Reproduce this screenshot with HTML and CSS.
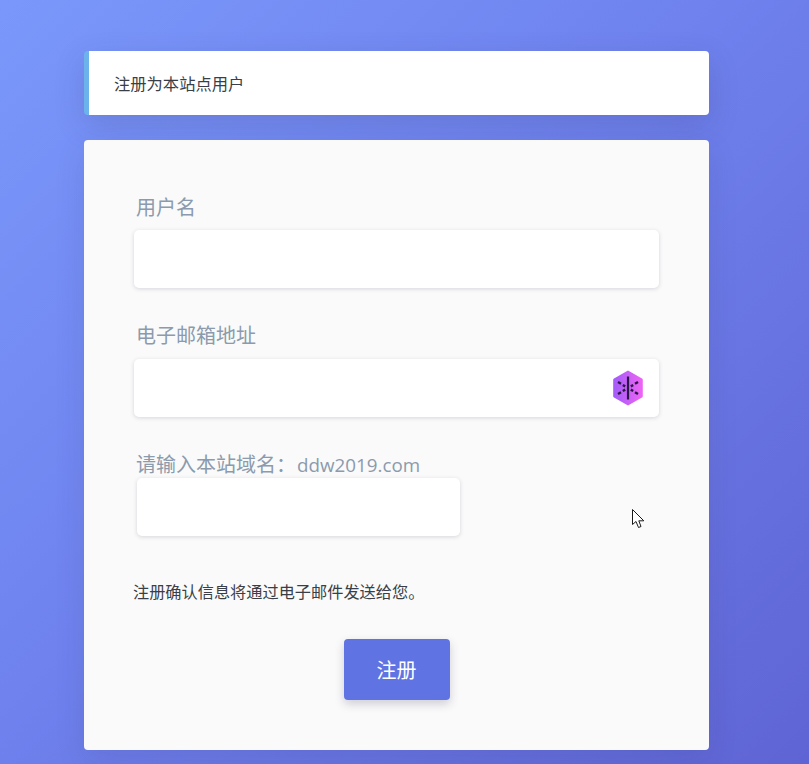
FILE: index.html
```html
<!DOCTYPE html>
<html lang="zh-CN">
<head>
<meta charset="utf-8">
<title>注册</title>
<link rel="stylesheet" href="styles.css">
</head>
<body>
<main class="page">
  <header class="notice">注册为本站点用户</header>
  <form class="panel">
    <div class="field">
      <label class="label">用户名</label>
      <input class="input" type="text">
    </div>
    <div class="field">
      <label class="label label-mail">电子邮箱地址</label>
      <div class="input-wrap">
        <input class="input" type="text">
        <svg class="ext-icon" width="32" height="36" viewBox="0 0 32 36">
          <defs>
            <linearGradient id="hex" x1="0" y1="0" x2="1" y2="0">
              <stop offset="0" stop-color="#a25bfa"/>
              <stop offset="1" stop-color="#f064f4"/>
            </linearGradient>
          </defs>
          <path d="M16 .5 30 8.500a1.500 1.500 0 0 1 .8 1.300V26.200a1.500 1.500 0 0 1-.8 1.300L16 35.500 2 27.500a1.500 1.500 0 0 1-.8-1.300V9.800a1.500 1.500 0 0 1 .8-1.300Z" fill="url(#hex)"/>
          <path d="M16 6.500V29.500" stroke="#2b1747" stroke-width="2.200" fill="none"/>
          <path d="M6 12 9 13.800M10.800 15 13.200 16.400M26 12 23 13.800M21.200 15 18.800 16.400M6 24 9 22.200M10.800 21 13.200 19.600M26 24 23 22.200M21.200 21 18.800 19.600" stroke="#2b1747" stroke-width="2.400" fill="none"/>
        </svg>
      </div>
    </div>
    <div class="captcha">
      <label class="label label-tight">请输入本站域名：<span class="latin">ddw2019.com</span></label>
      <input class="input input-short" type="text">
    </div>
    <p class="hint">注册确认信息将通过电子邮件发送给您。</p>
    <div class="actions">
      <button class="submit" type="button">注册</button>
    </div>
  </form>
</main>
<svg class="cursor" width="13" height="20" viewBox="0 0 13 20">
  <path d="M.5.5V15.500L4 12.500 6.500 18.500 9 17.500 6.800 11.800H11.800Z" fill="#fff" stroke="#1a1a1a" stroke-width="1"/>
</svg>
</body>
</html>
```
FILE: styles.css
```css
* { box-sizing: border-box; }
html, body { height: 100%; }
body {
  margin: 0;
  height: 764px;
  overflow: hidden;
  background: linear-gradient(135deg, #7a98fb 0%, #6f82ee 45%, #5f64d4 100%);
  font-family: "Open Sans", "Noto Sans CJK SC", sans-serif;
  color: #3a3f47;
}
.page {
  width: 625px;
  margin-left: 84px;
  padding-top: 51px;
  display: flex;
  flex-direction: column;
  gap: 25px;
}
.notice {
  height: 64px;
  padding-left: 25px;
  display: flex;
  align-items: center;
  background: #fff;
  border-left: 5px solid #6cb2eb;
  border-radius: 4px;
  font-size: 16.300px;
  box-shadow: 0 10px 30px rgba(50, 50, 93, .18);
}
.panel {
  height: 610px;
  padding: 50px 50px 0;
  background: #fafafa;
  border-radius: 4px;
  box-shadow: 0 10px 30px rgba(50, 50, 93, .12);
}
.field { margin-bottom: 30px; }
.label {
  display: block;
  height: 40px;
  padding: 3px 0 0 2px;
  font-size: 20px;
  line-height: 30px;
  color: #8b9bad;
}
.label-mail { height: 41px; }
.input {
  display: block;
  width: 100%;
  height: 58px;
  border: 0;
  border-radius: 5px;
  background: #fff;
  box-shadow: 0 1px 4px rgba(50, 50, 93, .18);
  outline: 0;
}
.input-wrap { position: relative; }
.ext-icon { position: absolute; right: 15px; top: 11px; }
.captcha { padding-left: 3px; }
.label-tight { height: 31px; margin-left: -1px; padding: 3px 0 0; line-height: 30px; white-space: nowrap; }
.latin { margin-left: 1px; font-size: 18.800px; }
.input-short { width: 323px; }
.hint {
  margin: 44px 0 0 -1px;
  font-size: 16.200px;
  line-height: 24px;
}
.actions { display: flex; justify-content: center; margin-top: 35px; }
.submit {
  width: 106px;
  height: 61px;
  border: 0;
  border-radius: 4px;
  background: #5f74e2;
  color: #fff;
  font: inherit;
  font-size: 20px;
  box-shadow: 0 4px 10px rgba(50, 50, 93, .22);
}
.cursor { position: absolute; left: 632px; top: 509px; }
```
